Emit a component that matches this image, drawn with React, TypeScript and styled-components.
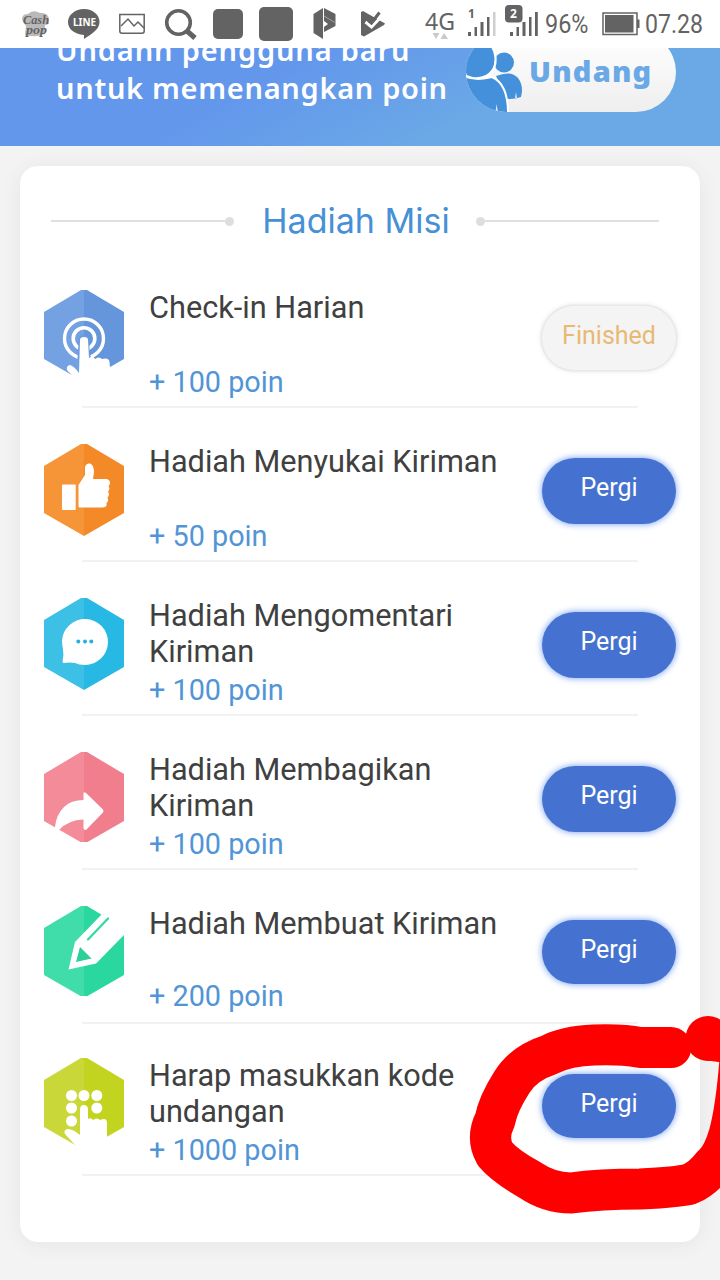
import React from "react";
import styled, { createGlobalStyle } from "styled-components";

const GlobalStyle = createGlobalStyle`
  * { box-sizing: border-box; }
  body {
    margin: 0;
    background: #f3f3f3;
    font-family: Roboto, "Liberation Sans", sans-serif;
  }
`;

const Screen = styled.div`
  position: relative;
  width: 720px;
  height: 1280px;
  overflow: hidden;
  background: #f3f3f3;
`;

const StatusBar = styled.header`
  height: 48px;
  background: #fff;
`;

const Banner = styled.section`
  display: flex;
  align-items: flex-end;
  height: 98px;
  padding: 0 44px 34px 56px;
  overflow: hidden;
  background: linear-gradient(153deg, #6397ec 0%, #6397ec 36%, #6aa8e6 66%, #6aa8e6 100%);
`;

const BannerText = styled.p`
  flex: none;
  width: 410px;
  margin: 0 0 5px;
  color: #fff;
  font: 600 29px/38px "Noto Sans", sans-serif;
  white-space: nowrap;
`;

const BannerLine = styled.span<{ $spacing: number }>`
  display: block;
  letter-spacing: ${(p) => p.$spacing}px;
`;

const InvitePill = styled.div`
  display: flex;
  flex: none;
  align-items: center;
  width: 210px;
  height: 80px;
  border-radius: 40px;
  overflow: hidden;
  background: linear-gradient(#fff, #f9f9f9 40%, #eee);
`;

const InviteLabel = styled.span`
  margin: 0 0 3px 3px;
  color: #6aa8e6;
  font: 900 29px/40px "Noto Sans", sans-serif;
  letter-spacing: 1.2px;
`;

const Card = styled.main`
  height: 1076px;
  margin: 20px 20px 0;
  border-radius: 18px;
  background: #fff;
  box-shadow: 0 2px 22px rgba(0, 0, 0, 0.06);
`;

const Heading = styled.div`
  display: flex;
  align-items: center;
  justify-content: center;
  height: 110px;
  padding-right: 10px;
`;

const Title = styled.h1`
  width: 242px;
  margin: 0;
  padding-left: 2px;
  color: #4690d6;
  font: 400 34px/40px Inter, sans-serif;
  text-align: center;
  white-space: nowrap;
`;

const Rule = styled.i<{ $flip?: boolean }>`
  display: flex;
  flex-direction: ${(p) => (p.$flip ? "row-reverse" : "row")};
  align-items: center;
  width: 183px;

  &::before {
    content: "";
    flex: 1;
    height: 2px;
    background: #e0e0e0;
  }
  &::after {
    content: "";
    width: 9px;
    height: 9px;
    border-radius: 50%;
    background: #dedede;
  }
`;

const List = styled.ul`
  margin: 0;
  padding: 0;
  list-style: none;
`;

const Row = styled.li<{ $height: number; $top: number }>`
  display: flex;
  flex-wrap: wrap;
  align-content: flex-start;
  height: ${(p) => p.$height}px;
  padding: ${(p) => p.$top}px 24px 0;
`;

const RowMain = styled.div`
  display: flex;
  width: 100%;
  height: 116px;
`;

const Divider = styled.div`
  width: 556px;
  height: 2px;
  margin-left: 38px;
  background: #f2f2f2;
`;

const Mission = styled.div<{ $pointsGap: number }>`
  width: 392px;
  margin-left: 25px;
  line-height: 36px;

  h2 {
    height: 72px;
    margin: 0 0 ${(p) => p.$pointsGap}px;
    color: #404040;
    font: inherit;
    font-size: 30.7px;
    white-space: pre-line;
  }
  p {
    margin: 0;
    color: #5195d6;
    font-size: 28.8px;
  }
`;

const Action = styled.button<{ $finished?: boolean; $height: number; $offset: number }>`
  width: 134px;
  height: ${(p) => p.$height}px;
  margin: ${(p) => p.$offset}px 0 0 1px;
  padding: 0 0 ${(p) => (p.$height === 64 ? 5 : 7)}px;
  border: 0;
  border-radius: 34px;
  background: ${(p) => (p.$finished ? "#f4f4f4" : "#4572d0")};
  box-shadow: ${(p) =>
    p.$finished ? "0 0 1px 1.5px #e8e8e8, 0 0 6px #ddd" : "0 0 7px #6f9af0"};
  color: ${(p) => (p.$finished ? "#e8b973" : "#fff")};
  font: 400 25px/30px Roboto, sans-serif;
`;

const Doodle = styled.svg`
  position: absolute;
  left: 460px;
  top: 1000px;
  pointer-events: none;
`;

const StatusIcons = () => (
  <svg width="720" height="48" fill="#636363">
    <g>
      <path d="M23 22Q20 14 28 14Q33 9 40 13Q48 12 49 19Q50 25 45 25L45 34Q35 38 25 35L26 26Z" fill="#b9b9b9" />
      <text x="23" y="24" fontFamily="Liberation Serif, serif" fontStyle="italic" fontWeight="700" fontSize="12" textLength="26" lengthAdjust="spacingAndGlyphs">Cash</text>
      <text x="26" y="34" fontFamily="Liberation Serif, serif" fontStyle="italic" fontWeight="700" fontSize="12" textLength="21" lengthAdjust="spacingAndGlyphs">pop</text>
    </g>
    <path d="M84 9C93 9 99.500 15 99.500 22C99.500 29 92 34 84 39V35C74 34 68 29 68 22C68 15 75 9 84 9Z" />
    <text x="73" y="26" fill="#fff" fontFamily="Noto Sans, sans-serif" fontWeight="700" fontSize="10.500" textLength="23" lengthAdjust="spacingAndGlyphs">LINE</text>
    <g fill="none" stroke="#636363">
      <path d="M119.800 14.500H144.200V31Q144.200 33.200 142 33.200H122Q119.800 33.200 119.800 31Z" strokeWidth="1.500" />
      <path d="M121 26L128 19L134 26L138 22L144 28" strokeWidth="1.500" />
      <circle cx="178.500" cy="22.500" r="11.800" strokeWidth="3.600" />
      <path d="M187 31L195 38" strokeWidth="5" />
    </g>
    <rect x="213" y="9" width="30" height="30" rx="5" />
    <rect x="259" y="7" width="34" height="34" rx="5" />
    <path d="M313.500 14L323 8V39L313.500 33Z" />
    <path d="M324 8L335.500 14V26L324 32V27L328 24L324 21Z" />
    <path d="M324 16L335 22.500" stroke="#a8a8a8" strokeWidth="0.900" fill="none" />
    <path d="M361 12L363 11L385 23.500L384 25L364 36.500L361 35Z" />
    <path d="M380 10L388 16L383 20L377 14Z" fill="#fff" />
    <path d="M365.500 22L371.500 27L381 17" fill="none" stroke="#fff" strokeWidth="3" />
    <path d="M368.500 20.500L371.500 23L379.500 12.500" fill="none" stroke="#636363" strokeWidth="3" />
    <text x="425" y="30" fontFamily="Noto Sans, sans-serif" fontSize="23" textLength="30" lengthAdjust="spacingAndGlyphs">4G</text>
    <path d="M432.500 33H439.500L436 39ZM440.500 39H448L444 33Z" fill="#c9c9c9" />
    <text x="468" y="18" fontFamily="Noto Sans, sans-serif" fontWeight="700" fontSize="12">1</text>
    <path d="M468 32h3v4h-3zM474.500 27h2.500v9h-2.500zM480.500 22h3v14h-3zM487 17h2.500v19h-2.500z" />
    <path d="M493 12h2.500v24H493z" fill="#cfcfcf" />
    <path d="M510 32h3v4h-3zM516.500 27h2.500v9h-2.500zM522.500 22h3v14h-3zM529 17h2.500v19h-2.500zM535 12h2.800v24H535z" />
    <rect x="505" y="5" width="17.500" height="17.500" rx="4" />
    <text x="510" y="18" fill="#fff" fontFamily="Noto Sans, sans-serif" fontWeight="700" fontSize="12">2</text>
    <text x="545" y="33" fontFamily="Roboto, sans-serif" fontSize="25" textLength="43.500" lengthAdjust="spacingAndGlyphs">96%</text>
    <rect x="603" y="13" width="34" height="21.500" fill="none" stroke="#636363" strokeWidth="1.500" />
    <rect x="605" y="15" width="28.500" height="17.500" />
    <rect x="637" y="19.500" width="2.500" height="8.500" />
    <text x="645" y="33" fontFamily="Roboto, sans-serif" fontSize="25" textLength="58" lengthAdjust="spacingAndGlyphs">07.28</text>
  </svg>
);

/* Two people clipped by the round end of the pill */
const People = () => (
  <svg width="60" height="80" viewBox="466 32 60 80" fill="#4490da">
    <circle cx="504" cy="62.500" r="10" />
    <path d="M496 76Q511 70 518 78Q524 86 521 97Q515 99.500 507 99Z" />
    <path d="M460 75Q474 81 492 77Q508 84 508 113H460Z" stroke="#fff" strokeWidth="2" />
    <ellipse cx="479" cy="59" rx="16" ry="18" />
    <path d="M460 73Q482 85 493 70Q496 65 495.500 57Q495 50 490 44" fill="none" stroke="#fff" strokeWidth="2.200" />
    <path d="M460 50L467 76L476 78L485 70Z" />
    <path d="M464 75Q478 82 492 76" fill="none" stroke="#fff" strokeWidth="2" />
    <path d="M496.500 104L498 112H495.500ZM516 92L517 98H515Z" fill="#dceafa" />
  </svg>
);

type Kind = "tap" | "like" | "comment" | "share" | "write" | "code";

const palette: Record<Kind, [string, string]> = {
  tap: ["#73a1e2", "#6596dc"],
  like: ["#f69537", "#f48a27"],
  comment: ["#3dc0e6", "#27b8e3"],
  share: ["#f38b98", "#f07e8d"],
  write: ["#40dcaa", "#2ad79e"],
  code: ["#c9d838", "#c2d41f"],
};

const glyphs: Record<Kind, React.ReactNode> = {
  tap: (
    <>
      <circle cx="40" cy="48.500" r="19.500" fill="none" stroke="#fff" strokeWidth="3.400" />
      <circle cx="40" cy="48.500" r="10.800" fill="none" stroke="#fff" strokeWidth="3.600" />
      <path d="M33.500 69L34.500 52Q34.500 45 40 45Q45.500 45 45.500 52V64L48 69Z" fill="#6a9ade" />
      <path d="M36 50Q36 47 40 47Q44 47 44 50L45 68Q49 65 51 69Q55 66 58 69Q65 67 65.500 72L66 78L62 93H35L23 80Q22 76 26 75Q30 76 35 83Z" fill="#fff" />
    </>
  ),
  like: (
    <g fill="#fff">
      <rect x="18" y="40.500" width="13.700" height="25.500" rx="0.800" />
      <path d="M34.500 62.500V41L41 31V23Q42 19 46 19.500Q50 21 50 28L49 35H63Q66 36 66 39Q66 41 64.500 42Q66.500 45 64 47.500Q66 51 63.500 53.500Q65 57 62.500 59Q63.500 63 59 63.500H36Q34.500 63.500 34.500 62.500Z" />
    </g>
  ),
  comment: (
    <>
      <path d="M18 43A23 23 0 1 1 41 67Q35 67 31 65Q26 64 19.500 65Q18.500 65 18.600 63Q20 57 19 51Q18 47 18 43Z" fill="#fff" />
      <g fill="#27b0dc">
        <circle cx="34.300" cy="43.500" r="2" />
        <circle cx="41" cy="43.500" r="2" />
        <circle cx="47.300" cy="43.500" r="2" />
      </g>
    </>
  ),
  share: (
    <path d="M11 75Q12 63 20 55Q27 48 39.500 48V41.500Q40 39.500 42 41L59 57.500Q60 59 59 60.500L42.500 77.500Q40 79 39.500 76V67.500Q24 68 15 78L11 81Z" fill="#fff" />
  ),
  write: (
    <>
      <path d="M58 8L31 36L24.500 63.500L52 57.500L82 27V6Z" fill="#fff" />
      <path d="M36 41L32 56L47.500 52.500Z" fill="#2bcf99" />
      <path d="M44 33.500L64 12.500" stroke="#35d9a5" strokeWidth="2.300" strokeLinecap="round" />
    </>
  ),
  code: (
    <>
      <g fill="#fff">
        {[[27.5, 37.5], [40, 37.5], [52.8, 37.5], [27.5, 50], [52.8, 50], [27.5, 63]].map(([x, y]) => (
          <circle key={`${x}-${y}`} cx={x} cy={y} r="5.500" />
        ))}
      </g>
      <path d="M36 52Q36 47 40 47Q44 47 44 52V61Q47 59 49 62Q53 59 56 62Q63 59 63 65V80L58 93H32V88L21 76Q19 72 24 71Q29 71 36 77Z" fill="#fff" />
    </>
  ),
};

const HexIcon = ({ kind }: { kind: Kind }) => {
  const [left, right] = palette[kind];
  return (
    <svg width="80" height="92" viewBox="0 0 80 92">
      <path d="M37 0H40V92L0 69V22Z" fill={left} />
      <path d="M40 0H43L80 22V69L40 92Z" fill={right} />
      {glyphs[kind]}
      {(kind === "share" || kind === "write") && <rect y="90" width="80" height="2" fill="#fff" />}
    </svg>
  );
};

interface MissionItem {
  kind: Kind;
  title: string;
  points: string;
  height?: number;
  top?: number;
  gap?: number;
  action?: number;
  offset?: number;
  finished?: boolean;
}

const missions: MissionItem[] = [
  { kind: "tap", title: "Check-in Harian", points: "+ 100 poin", height: 132, top: 14, action: 64, offset: 16, finished: true },
  { kind: "like", title: "Hadiah Menyukai Kiriman", points: "+ 50 poin" },
  { kind: "comment", title: "Hadiah Mengomentari\nKiriman", points: "+ 100 poin" },
  { kind: "share", title: "Hadiah Membagikan\nKiriman", points: "+ 100 poin" },
  { kind: "write", title: "Hadiah Membuat Kiriman", points: "+ 200 poin", gap: 0, action: 64 },
  { kind: "code", title: "Harap masukkan kode\nundangan", points: "+ 1000 poin", height: 152, top: 34, action: 64, offset: 16 },
];

export default function App() {
  return (
    <Screen>
      <GlobalStyle />
      <StatusBar>
        <StatusIcons />
      </StatusBar>
      <Banner>
        <BannerText>
          <BannerLine $spacing={0.85}>Undann pengguna baru</BannerLine>
          <BannerLine $spacing={0.7}>untuk memenangkan poin</BannerLine>
        </BannerText>
        <InvitePill>
          <People />
          <InviteLabel>Undang</InviteLabel>
        </InvitePill>
      </Banner>
      <Card>
        <Heading>
          <Rule />
          <Title>Hadiah Misi</Title>
          <Rule $flip />
        </Heading>
        <List>
          {missions.map(({ kind, title, points, height = 154, top = 36, gap = 2, action = 66, offset = 14, finished }) => (
            <Row key={kind} $height={height} $top={top}>
              <RowMain>
                <HexIcon kind={kind} />
                <Mission $pointsGap={gap}>
                  <h2>{title}</h2>
                  <p>{points}</p>
                </Mission>
                <Action $finished={finished} $height={action} $offset={offset}>
                  {finished ? "Finished" : "Pergi"}
                </Action>
              </RowMain>
              <Divider />
            </Row>
          ))}
        </List>
      </Card>
      <Doodle width="260" height="230" viewBox="460 1000 260 230" fill="none" stroke="#f00" strokeWidth="41" strokeLinecap="round" strokeLinejoin="round">
        <path d="M671 1047.500H640Q622 1044 594 1045Q566 1046 549 1055Q524 1063 512 1082Q498 1104 495 1120Q486 1138 495 1154Q505 1166 530 1180Q549 1193 571 1193Q600 1189 640 1189Q680 1187 690 1184Q703 1178 712 1166Q722 1158 729 1135Q736 1110 740 1060" />
        <circle cx="708" cy="1038.500" r="22.500" fill="#f00" stroke="none" />
        <path d="M712 1040.500L740 1044" />
      </Doodle>
    </Screen>
  );
}
